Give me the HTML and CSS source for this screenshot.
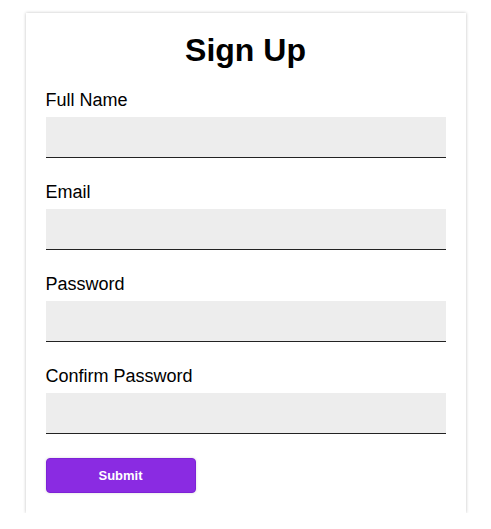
FILE: index.html
```html
<!DOCTYPE html>
<html lang="en">
<head>
    <meta charset="UTF-8">
    <meta name="viewport" content="width=device-width, initial-scale=1.0">
    <title>Sign Up</title>
    <link rel="stylesheet" href="styles.css">
</head>
<body>
    <form class="signup-card">
        <h2 class="signup-title">Sign Up</h2>

        <div class="form-group">
            <label class="form-label" for="fullName">Full Name</label>
            <input class="form-input" type="text" id="fullName">
        </div>

        <div class="form-group">
            <label class="form-label" for="email">Email</label>
            <input class="form-input" type="email" id="email">
        </div>

        <div class="form-group">
            <label class="form-label" for="password">Password</label>
            <input class="form-input" type="password" id="password">
        </div>

        <div class="form-group">
            <label class="form-label" for="confirmPassword">Confirm Password</label>
            <input class="form-input" type="password" id="confirmPassword">
        </div>

        <button class="submit-button" type="submit">Submit</button>
    </form>
</body>
</html>
```

FILE: styles.css
```css
* {
    box-sizing: border-box;
    margin: 0;
    padding: 0;
}

body {
    font-family: "Liberation Sans", Arial, sans-serif;
    display: flex;
    justify-content: center;
    padding-top: 13px;
    background-color: #fff;
}

.signup-card {
    width: 440px;
    background: white;
    padding: 19px 20px 20px;
    box-shadow: 0 0 3px rgba(0,0,0,0.25);
}

.signup-title {
    font-size: 32px;
    line-height: 36px;
    font-weight: bold;
    text-align: center;
    color: #000;
    margin-bottom: 22px;
}

.form-group {
    margin-bottom: 24px;
}

.form-label {
    display: block;
    font-size: 18px;
    line-height: 20px;
    color: #000;
    margin-bottom: 7px;
}

.form-input {
    display: block;
    width: 100%;
    height: 41px;
    background: #ededed;
    border: none;
    border-bottom: 1px solid #222;
    font-size: 16px;
    padding: 0 10px;
}

.submit-button {
    display: block;
    width: 150px;
    height: 35px;
    background: #8a2be2;
    color: white;
    border: 1px solid #7d22d6;
    border-radius: 4px;
    font-family: "Liberation Sans", Arial, sans-serif;
    font-size: 13px;
    font-weight: bold;
    box-shadow: 0 0 3px rgba(0,0,0,0.15);
    cursor: pointer;
}
```
